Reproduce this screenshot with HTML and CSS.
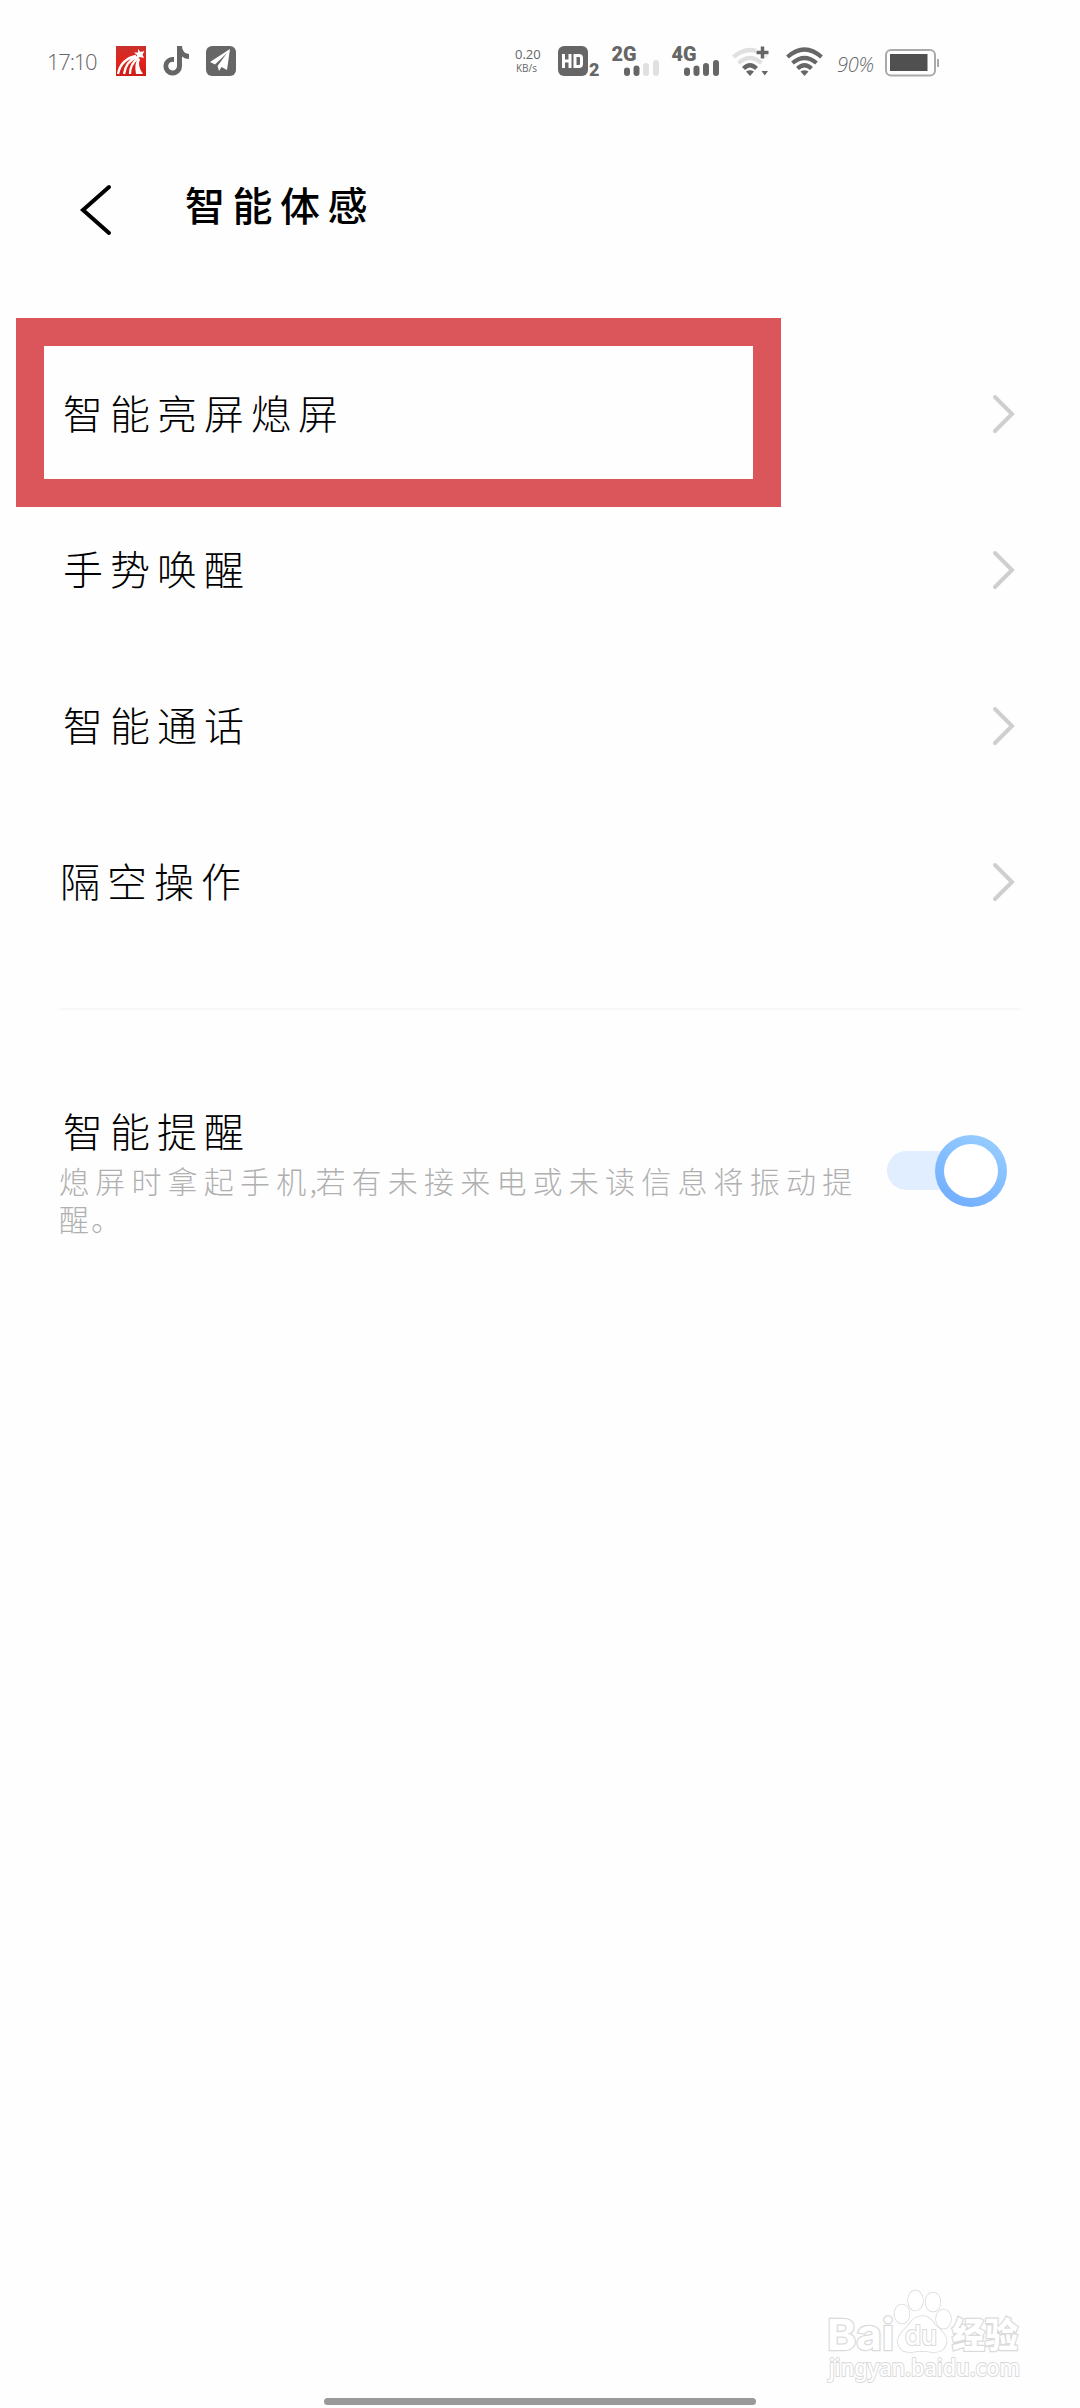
FILE: index.html
```html
<!DOCTYPE html>
<html lang="zh-CN">
<head>
<meta charset="utf-8">
<title>智能体感</title>
<link rel="stylesheet" href="styles.css">
</head>
<body>
<div class="screen">
  <header class="status">
    <div class="status-left">
      <span class="clock">17:10</span>
      <svg class="app-star" width="30" height="30" viewBox="0 0 30 30">
        <defs><linearGradient id="red" x1="0" y1="0" x2="0" y2="1"><stop offset="0" stop-color="#c8322c"/><stop offset=".5" stop-color="#e2231c"/><stop offset="1" stop-color="#cf1c18"/></linearGradient></defs>
        <rect width="30" height="30" fill="url(#red)"/>
        <g fill="none" stroke="#fff" stroke-width="2.3"><path d="M2 28Q5 13 20 10"/><path d="M8 28Q10 15 21 11"/><path d="M14 28Q14 18 22 12"/></g>
        <path d="M20 28Q18 18 22 12L24 13Q21 20 27 28Z" fill="#fff"/>
        <path d="M22 3L24.5 6L28.500 5L26.500 8.500L28 12L24 11L20.500 13L21 9L18 6.500L22 6.500Z" fill="#fff"/>
      </svg>
      <svg class="app-note" width="27" height="30" viewBox="0 0 27 30">
        <path d="M14 0H19Q19 7 26 8V13Q22 13 19 10.500V20A9.300 9.300 0 1 1 11 11V16A4.400 4.400 0 1 0 14 20Z" fill="#666"/>
      </svg>
      <svg class="app-plane" width="30" height="30" viewBox="0 0 30 30">
        <rect width="30" height="30" rx="6" fill="#666"/>
        <path d="M24 3L4 16L9 18.500L21 7L11.500 20L13 25L15.500 21L21 24Z" fill="#fff"/>
      </svg>
    </div>
    <div class="status-right">
      <div class="speed"><span>0.20</span><span class="unit">KB/s</span></div>
      <svg class="hd" width="44" height="30" viewBox="0 0 44 30">
        <rect width="30" height="30" rx="6" fill="#666"/>
        <path d="M5.500 8V22M12 8V22M5.500 15H12M17 9.500H21Q23.500 9.500 23.500 12V18Q23.500 20.500 21 20.500H17ZM17 8V22" fill="none" stroke="#fff" stroke-width="3"/>
        <text class="badge" x="31" y="29.500" font-size="18">2</text>
      </svg>
      <svg class="signal" width="48" height="30" viewBox="0 0 48 30">
        <text class="badge" x="-.5" y="14.500" font-size="20" textLength="25" lengthAdjust="spacingAndGlyphs">2G</text>
        <rect class="on" x="12" y="21.500" width="6" height="8.500" rx="3"/><rect class="on" x="21.500" y="19.500" width="6" height="10.500" rx="3"/>
        <rect class="off" x="31" y="17" width="6" height="13" rx="3"/><rect class="off" x="41" y="14" width="6" height="16" rx="3"/>
      </svg>
      <svg class="signal second" width="48" height="30" viewBox="0 0 48 30">
        <text class="badge" x="-.5" y="14.500" font-size="20" textLength="25" lengthAdjust="spacingAndGlyphs">4G</text>
        <rect class="on" x="12" y="21.500" width="6" height="8.500" rx="3"/><rect class="on" x="21.500" y="19.500" width="6" height="10.500" rx="3"/>
        <rect class="on" x="31" y="17" width="6" height="13" rx="3"/><rect class="on" x="41" y="14" width="6" height="16" rx="3"/>
      </svg>
      <svg class="wifi-plus" width="38" height="30" viewBox="0 0 38 30">
        <g fill="none" stroke-width="4.200"><path d="M1.500 11Q18 -3 34.500 11" stroke="#e0e0e0"/><path d="M6.500 17Q18 7 29.500 17" stroke="#e0e0e0"/><path d="M11.500 22.500Q18 16 24.500 22.500" stroke="#666"/></g>
        <path d="M14 25.500Q18 23 22 25.500L18 30Z" fill="#666"/>
        <path d="M24 6.500H37M30.500 0V13" stroke="#fff" stroke-width="6"/>
        <path d="M24.500 6.500H36.500M30.500 .5V12.500" stroke="#666" stroke-width="3.500"/>
        <path d="M29.500 25H36L32.800 29.500Z" fill="#666"/>
      </svg>
      <svg class="wifi" width="38" height="30" viewBox="0 0 38 30">
        <g fill="none" stroke="#666" stroke-width="4.200"><path d="M1.500 11Q18.500 -4 35.500 11"/><path d="M6.500 17Q18.500 7 30.500 17"/><path d="M11.500 22.500Q18.500 16 25.500 22.500"/></g>
        <path d="M14.500 25.500Q18.500 23 22.500 25.500L18.500 30Z" fill="#666"/>
      </svg>
      <span class="percent">90%</span>
      <svg class="battery" width="55" height="28" viewBox="0 0 55 28">
        <rect x="1" y="1" width="49" height="25.500" rx="5" fill="#fff" stroke="#aaa" stroke-width="2"/>
        <rect x="5" y="5" width="37.500" height="17" fill="#505050"/>
        <path d="M53 10V18" stroke="#aaa" stroke-width="2"/>
      </svg>
    </div>
  </header>

  <div class="titlebar">
    <svg class="back" width="34" height="54" viewBox="0 0 34 54"><path d="M29 4L3 27L29 50" fill="none" stroke="#000" stroke-width="4" stroke-linecap="round"/></svg>
    <h1>智能体感</h1>
  </div>

  <main>
    <div class="row marked"><span>智能亮屏熄屏</span><svg width="24" height="42" viewBox="0 0 24 42"><path d="M4 4L21 21L4 38"/></svg></div>
    <div class="row"><span>手势唤醒</span><svg width="24" height="42" viewBox="0 0 24 42"><path d="M4 4L21 21L4 38"/></svg></div>
    <div class="row"><span>智能通话</span><svg width="24" height="42" viewBox="0 0 24 42"><path d="M4 4L21 21L4 38"/></svg></div>
    <div class="row outdent"><span>隔空操作</span><svg width="24" height="42" viewBox="0 0 24 42"><path d="M4 4L21 21L4 38"/></svg></div>
    <section class="remind">
      <div class="copy">
        <h2>智能提醒</h2>
        <p>熄屏时拿起手机<span class="comma">,</span>若有未接来电或未读信息将振动提<br><span class="tail">醒。</span></p>
      </div>
      <svg class="switch" width="122" height="74" viewBox="0 0 122 74">
        <defs><linearGradient id="ring" x1=".25" y1="1" x2=".8" y2="0"><stop offset="0" stop-color="#71adff"/><stop offset="1" stop-color="#97ceff"/></linearGradient></defs>
        <rect x="1" y="17" width="90" height="39" rx="19.500" fill="#e1eeff"/>
        <circle cx="85" cy="37" r="36" fill="url(#ring)"/><circle cx="85" cy="37" r="27" fill="#fff"/>
      </svg>
    </section>
  </main>

  <footer>
    <svg class="watermark" width="200" height="100" viewBox="0 0 200 100">
      <g class="ghost">
        <text class="latin" x="-1" y="62" font-size="43" textLength="67" lengthAdjust="spacingAndGlyphs">Bai</text>
        <ellipse cx="74" cy="26" rx="7.500" ry="9.500"/><ellipse cx="87.500" cy="12.500" rx="7.500" ry="10"/><ellipse cx="105" cy="14" rx="7.500" ry="9.500"/><ellipse cx="115.500" cy="31" rx="7.500" ry="9.500"/>
        <path d="M94 28Q102 28 107 37Q119 46 118.500 54Q117 65 104 64Q94 62 84 64Q72 65 70 55Q69 47 79 39Q86 28 94 28Z"/>
        <text class="latin thin" x="77" y="57" font-size="27" textLength="32" lengthAdjust="spacingAndGlyphs">du</text>
        <text class="cjk" x="124" y="60" font-size="35" textLength="66" lengthAdjust="spacingAndGlyphs">经验</text>
        <text class="url" x="1" y="88" font-size="23" textLength="191" lengthAdjust="spacingAndGlyphs">jingyan.baidu.com</text>
      </g>
    </svg>
    <div class="home-bar"></div>
  </footer>
</div>
</body>
</html>
```
FILE: styles.css
```css
*, *::after { box-sizing: border-box; }
body { margin: 0; background: #fefefe; font-family: "Noto Sans CJK SC", sans-serif; font-weight: 300; color: #000; }
svg { display: block; flex: none; overflow: visible; }
.screen { width: 1080px; height: 2408px; display: flex; flex-direction: column; }

.status { height: 120px; padding: 46px 140px 0 47px; display: flex; justify-content: space-between; align-items: flex-start; color: #666; }
.status-left, .status-right { display: flex; height: 30px; }
.clock { width: 69px; font: 300 22px/31px "Open Sans", sans-serif; letter-spacing: -1.2px; }
.app-note { margin-left: 17px; }
.app-plane { margin-left: 16px; }
.speed { width: 43px; display: flex; flex-direction: column; align-items: flex-start; font: 13px/15px "Open Sans", sans-serif; padding-top: 1px; }
.speed .unit { font-size: 10px; line-height: 12px; margin-left: 1px; }
.hd { margin-right: 10px; }
.badge { font-family: Roboto, sans-serif; font-weight: 900; fill: #666; }
.signal .on { fill: #666; }
.signal .off { fill: #e0e0e0; }
.second { margin-left: 12px; }
.wifi-plus { margin-left: 12px; }
.wifi { margin-left: 16px; }
.percent { width: 48px; margin-left: 13px; font: italic 300 20px/38px "Open Sans", sans-serif; letter-spacing: -.3px; white-space: nowrap; }
.battery { margin-top: 3px; }

.titlebar { height: 216px; padding: 63px 0 0 80px; display: flex; align-items: flex-start; }
h1 { margin: -9px 0 0 71px; font-size: 40px; line-height: 60px; font-weight: 500; letter-spacing: 7.5px; }

.row { position: relative; height: 156px; padding: 0 65px 0 63px; display: flex; align-items: center; justify-content: space-between; }
.row span { font-size: 40px; line-height: 56px; letter-spacing: 7px; margin-top: -5px; }
.outdent { padding-left: 60px; }
.row path { fill: none; stroke: #cfcfcf; stroke-width: 4; stroke-linecap: round; }
.marked::after { content: ""; position: absolute; left: 16px; top: -18px; width: 765px; height: 189px; border: 28px solid #da565b; }

.remind { margin: 48px 60px 0; border-top: 2px solid #f7f7f7; padding-top: 92px; display: flex; }
.copy { width: 826px; }
h2 { margin: 0 0 0 3px; font-size: 40px; line-height: 56px; font-weight: 300; letter-spacing: 7px; }
p { margin: 3px 0 0 -1px; font-size: 30px; line-height: 38px; letter-spacing: 6.2px; color: #b0b0b0; white-space: nowrap; }
.comma { display: inline-block; width: 6px; margin-left: -3px; letter-spacing: 0; }
.tail { letter-spacing: 2px; }
.switch { margin-top: 32px; }

footer { margin-top: auto; height: 120px; display: flex; flex-direction: column; align-items: center; justify-content: space-between; }
.watermark { align-self: flex-end; margin-right: 52px; }
.ghost { fill: #fff; stroke: #dadada; stroke-width: 1.5; paint-order: stroke; }
.ghost .latin { font-family: Inter, sans-serif; font-weight: 700; stroke-width: 2.5; }
.ghost .thin { font-weight: 500; stroke-width: 2; }
.ghost .cjk { font-weight: 900; stroke-width: 2.5; }
.ghost .url { font-family: "Noto Sans", sans-serif; font-weight: 500; stroke-width: 2; }
.home-bar { width: 432px; height: 7px; border-radius: 4px; background: #999; margin-bottom: 3px; }
```
